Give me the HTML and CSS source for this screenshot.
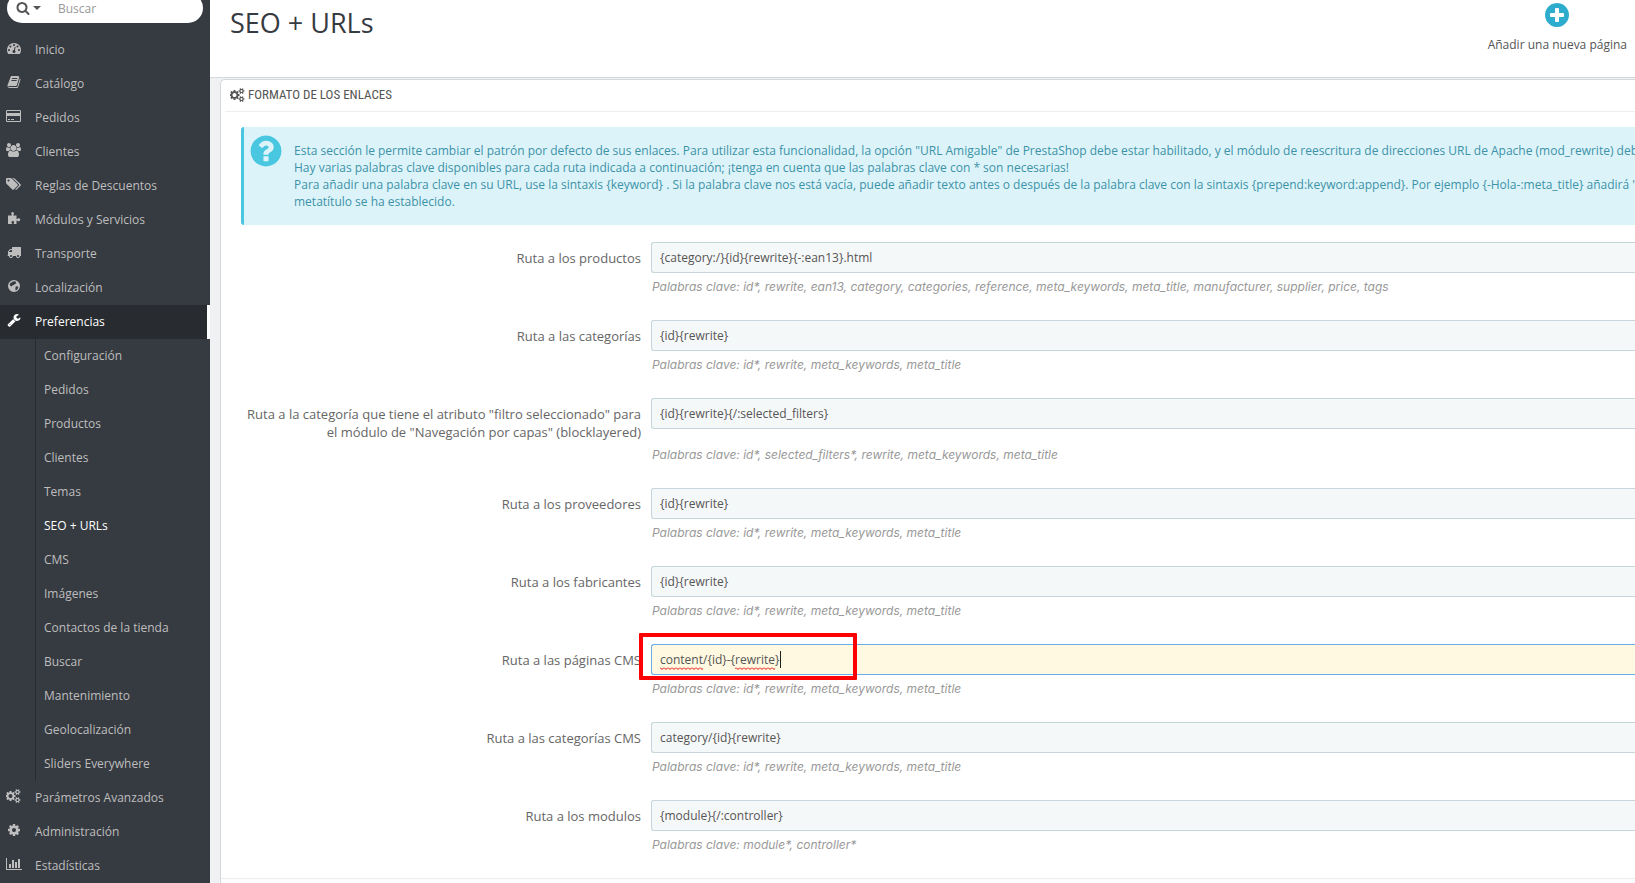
FILE: index.html
```html
<!DOCTYPE html>
<html lang="es">
<head>
<meta charset="UTF-8">
<meta name="viewport" content="width=device-width, initial-scale=1.0">
<title>SEO + URLs</title>
<link rel="stylesheet" href="styles.css">
</head>
<body>

<!-- Iconos que se usan más de una vez -->
<svg class="sprite" aria-hidden="true">
  <symbol id="icon-cogs" viewBox="0 0 1920 1792"><path d="M832 896q0-106-75-181t-181-75-181 75-75 181 75 181 181 75 181-75 75-181zm768 512q0-52-38-90t-90-38-90 38-38 90q0 53 37.5 90.5t90.5 37.5 90.5-37.5 37.5-90.5zm0-1024q0-52-38-90t-90-38-90 38-38 90q0 53 37.5 90.5t90.5 37.5 90.5-37.5 37.5-90.5zm-384 421v185q0 10-7 19.5t-16 10.5l-155 24q-11 35-32 76 34 48 90 115 7 11 7 20 0 12-7 19-23 30-82.5 89.5t-78.5 59.5q-11 0-21-7l-115-90q-37 19-77 31-11 108-23 155-7 24-30 24h-186q-11 0-20-7.5t-10-17.5l-23-153q-34-10-75-31l-118 89q-7 7-20 7-11 0-21-8-144-133-144-160 0-9 7-19 10-14 41-53t47-61q-23-44-35-82l-152-24q-10-1-17-9.5t-7-19.5v-185q0-10 7-19.5t16-10.5l155-24q11-35 32-76-34-48-90-115-7-11-7-20 0-12 7-20 22-30 82-89t79-59q11 0 21 7l115 90q34-18 77-32 11-108 23-154 7-24 30-24h186q11 0 20 7.5t10 17.5l23 153q34 10 75 31l118-89q8-7 20-7 11 0 21 8 144 133 144 160 0 8-7 19-12 16-42 54t-45 60q23 48 34 82l152 23q10 2 17 10.5t7 19.5zm640 533v140q0 16-149 31-12 27-30 52 51 113 51 138 0 4-4 7-122 71-124 71-8 0-46-47t-52-68q-20 2-30 2t-30-2q-14 21-52 68t-46 47q-2 0-124-71-4-3-4-7 0-25 51-138-18-25-30-52-149-15-149-31v-140q0-16 149-31 13-29 30-52-51-113-51-138 0-4 4-7 4-2 35-20t59-34 30-16q8 0 46 46.5t52 67.5q20-2 30-2t30 2q51-71 92-112l6-2q4 0 124 70 4 3 4 7 0 25-51 138 17 23 30 52 149 15 149 31zm0-1024v140q0 16-149 31-12 27-30 52 51 113 51 138 0 4-4 7-122 71-124 71-8 0-46-47t-52-68q-20 2-30 2t-30-2q-14 21-52 68t-46 47q-2 0-124-71-4-3-4-7 0-25 51-138-18-25-30-52-149-15-149-31v-140q0-16 149-31 13-29 30-52-51-113-51-138 0-4 4-7 4-2 35-20t59-34 30-16q8 0 46 46.5t52 67.5q20-2 30-2t30 2q51-71 92-112l6-2q4 0 124 70 4 3 4 7 0 25-51 138 17 23 30 52 149 15 149 31z"/></symbol>
</svg>

<div class="layout">

  <!-- Menú lateral -->
  <aside class="sidebar">
    <form class="search">
      <button type="button" class="search-type" aria-label="Tipo de búsqueda">
        <svg width="14" height="14" viewBox="0 0 1792 1792"><path d="M1216 832q0-185-131.5-316.5t-316.5-131.5-316.5 131.5-131.5 316.5 131.5 316.5 316.5 131.5 316.5-131.5 131.5-316.5zm512 832q0 52-38 90t-90 38q-54 0-90-38l-343-342q-179 124-399 124-143 0-273.5-55.5t-225-150-150-225-55.5-273.5 55.5-273.5 150-225 225-150 273.5-55.5 273.5 55.5 225 150 150 225 55.5 273.5q0 220-124 399l343 343q37 37 37 90z"/></svg>
        <span class="caret"></span>
      </button>
      <input type="text" class="search-input" placeholder="Buscar" aria-label="Buscar">
    </form>

    <nav class="menu">
      <a href="#" class="menu-item"><span class="menu-icon"><svg width="14" height="14" viewBox="0 0 1792 1792"><path d="M384 1152q0-53-37.5-90.5t-90.5-37.5-90.5 37.5-37.5 90.5 37.5 90.5 90.5 37.5 90.5-37.5 37.5-90.5zm192-448q0-53-37.5-90.5t-90.5-37.5-90.5 37.5-37.5 90.5 37.5 90.5 90.5 37.5 90.5-37.5 37.5-90.5zm428 481l101-382q6-26-7.5-48.5t-38.5-29.5-48 6.5-30 39.5l-101 382q-60 5-107 43.5t-63 98.5q-20 77 20 146t117 89 146-20 89-117q16-60-6-117t-72-91zm660-33q0-53-37.5-90.5t-90.5-37.5-90.5 37.5-37.5 90.5 37.5 90.5 90.5 37.5 90.5-37.5 37.5-90.5zm-640-640q0-53-37.5-90.5t-90.5-37.5-90.5 37.5-37.5 90.5 37.5 90.5 90.5 37.5 90.5-37.5 37.5-90.5zm448 192q0-53-37.5-90.5t-90.5-37.5-90.5 37.5-37.5 90.5 37.5 90.5 90.5 37.5 90.5-37.5 37.5-90.5zm320 448q0 261-141 483-19 29-54 29h-1402q-35 0-54-29-141-221-141-483 0-182 71-348t191-286 286-191 348-71 348 71 286 191 191 286 71 348z"/></svg></span>Inicio</a>
      <a href="#" class="menu-item"><span class="menu-icon"><svg width="14" height="14" viewBox="0 0 1792 1792"><path d="M1703 478q40 57 18 129l-275 906q-19 64-76.5 107.5t-122.5 43.5h-923q-77 0-148.5-53.5t-99.5-131.5q-24-67-2-127 0-4 3-27t4-37q1-8-3-21.5t-3-19.5q2-11 8-21t16.5-23.5 16.5-23.5q23-38 45-91.5t30-91.5q3-10 .5-30t-.5-28q3-11 17-28t17-23q21-36 42-92t25-90q1-9-2.5-32t.5-28q4-13 22-30.5t22-22.5q19-26 42.5-84.5t27.5-96.5q1-8-3-25.5t-2-26.5q2-8 9-18t18-23 17-21q8-12 16.5-30.5t15-35 16-36 19.5-32 26.5-23.5 36-11.5 47.5 5.5l-1 3q38-9 51-9h761q74 0 114 56t18 130l-274 906q-36 119-71.5 153.5t-128.5 34.5h-869q-27 0-38 15-11 16-1 43 24 70 144 70h923q29 0 56-15.5t35-41.5l300-987q7-22 5-57 38 15 59 43zm-1064 2q-4 13 2 22.5t20 9.5h608q13 0 25.5-9.5t16.5-22.5l21-64q4-13-2-22.5t-20-9.5h-608q-13 0-25.5 9.5t-16.5 22.5zm-83 256q-4 13 2 22.5t20 9.5h608q13 0 25.5-9.5t16.5-22.5l21-64q4-13-2-22.5t-20-9.5h-608q-13 0-25.5 9.5t-16.5 22.5z"/></svg></span>Catálogo</a>
      <a href="#" class="menu-item"><span class="menu-icon"><svg width="15" height="14" viewBox="0 0 1920 1792"><path d="M1760 128q66 0 113 47t47 113v1216q0 66-47 113t-113 47h-1600q-66 0-113-47t-47-113v-1216q0-66 47-113t113-47h1600zm-1600 128q-13 0-22.5 9.5t-9.5 22.5v224h1664v-224q0-13-9.5-22.5t-22.5-9.5h-1600zm1600 1280q13 0 22.5-9.5t9.5-22.5v-608h-1664v608q0 13 9.5 22.5t22.5 9.5h1600zm-1504-128v-128h256v128h-256zm384 0v-128h384v128h-384z"/></svg></span>Pedidos</a>
      <a href="#" class="menu-item"><span class="menu-icon"><svg width="15" height="14" viewBox="0 0 1920 1792"><path d="M593 896q-162 5-265 128h-134q-82 0-138-40.5t-56-118.5q0-353 124-353 6 0 43.5 21t97.5 42.5 119 21.5q67 0 133-23-5 37-5 66 0 139 81 256zm1071 637q0 120-73 189.5t-194 69.5h-874q-121 0-194-69.5t-73-189.5q0-53 3.5-103.5t14-109 26.5-108.5 43-97.5 62-81 85.5-53.5 111.5-20q10 0 43 21.5t73 48 107 48 135 21.5 135-21.5 107-48 73-48 43-21.5q61 0 111.5 20t85.5 53.5 62 81 43 97.5 26.5 108.5 14 109 3.5 103.5zm-1024-1277q0 106-75 181t-181 75-181-75-75-181 75-181 181-75 181 75 75 181zm704 384q0 159-112.5 271.5t-271.5 112.5-271.5-112.5-112.5-271.5 112.5-271.5 271.5-112.5 271.5 112.5 112.5 271.5zm576 225q0 78-56 118.5t-138 40.5h-134q-103-123-265-128 81-117 81-256 0-29-5-66 66 23 133 23 59 0 119-21.5t97.5-42.5 43.5-21q124 0 124 353zm-128-609q0 106-75 181t-181 75-181-75-75-181 75-181 181-75 181 75 75 181z"/></svg></span>Clientes</a>
      <a href="#" class="menu-item"><span class="menu-icon"><svg width="15" height="14" viewBox="0 0 1920 1792"><path d="M448 448q0-53-37.5-90.5t-90.5-37.5-90.5 37.5-37.5 90.5 37.5 90.5 90.5 37.5 90.5-37.5 37.5-90.5zm1067 576q0 53-37 90l-491 492q-39 37-91 37-53 0-90-37l-715-716q-38-37-64.5-101t-26.5-117v-416q0-52 38-90t90-38h416q53 0 117 26.5t102 64.5l715 714q37 39 37 91zm384 0q0 53-37 90l-491 492q-39 37-91 37-36 0-59-14t-53-45l470-470q37-37 37-90 0-52-37-91l-715-714q-38-38-102-64.5t-117-26.5h224q53 0 117 26.5t102 64.5l715 714q37 39 37 91z"/></svg></span>Reglas de Descuentos</a>
      <a href="#" class="menu-item"><span class="menu-icon"><svg width="14" height="14" viewBox="0 0 14 14"><path d="M1 4.500h3.600c.3 0 .4-.3.200-.6C4 2.800 4 1 5.600 1s1.600 1.800.8 2.900c-.2.300-.1.600.2.600H9.500v3.100c0 .4.300.5.700.3 1.100-.9 3-.8 3 .9s-1.900 1.800-3 .9c-.4-.3-.7-.1-.7.300v3H7c-.4 0-.5-.3-.3-.7.700-1 .5-2.300-.9-2.300s-1.700 1.300-.9 2.300c.3.400.1.700-.3.700H1z"/></svg></span>Módulos y Servicios</a>
      <a href="#" class="menu-item"><span class="menu-icon"><svg width="14" height="14" viewBox="0 0 1792 1792"><path d="M640 1408q0-52-38-90t-90-38-90 38-38 90 38 90 90 38 90-38 38-90zm-384-512h384v-256h-158q-13 0-22 9l-195 195q-9 9-9 22v30zm1280 512q0-52-38-90t-90-38-90 38-38 90 38 90 90 38 90-38 38-90zm256-1088v1024q0 15-4 26.5t-13.5 18.5-16.5 11.5-23.5 6-22.5 2-25.5 0-22.5-.5q0 106-75 181t-181 75-181-75-75-181h-384q0 106-75 181t-181 75-181-75-75-181h-64q-3 0-22.5.5t-25.5 0-22.5-2-23.5-6-16.5-11.5-13.5-18.5-4-26.5q0-26 19-45t45-19v-320q0-8-.5-35t0-38 2.5-34.5 6.5-37 14-30.5 22.5-30l198-198q19-19 50.5-32t58.5-13h160v-192q0-26 19-45t45-19h1024q26 0 45 19t19 45z"/></svg></span>Transporte</a>
      <a href="#" class="menu-item"><span class="menu-icon"><svg width="14" height="14" viewBox="0 0 14 14"><path fill-rule="evenodd" d="M7 1a6 6 0 1 0 0 12A6 6 0 0 0 7 1zM7.500 2.200l2 .8-.8.600.6.900-1.500.4-.9 1.200-1.600.3-.6 1.100-1.500-.8-.5-1.500.9-1.400 1.200-.3 1-.9zM8.800 7.300l2.200.2.300 1.300-1.300 1.900-1.300.8-.4-1.800z"/></svg></span>Localización</a>
      <a href="#" class="menu-item active"><span class="menu-icon"><svg width="14" height="14" viewBox="0 0 1792 1792"><path d="M448 1472q0-26-19-45t-45-19-45 19-19 45 19 45 45 19 45-19 19-45zm644-420l-682 682q-37 37-90 37-52 0-91-37l-106-108q-38-36-38-90 0-53 38-91l681-681q39 98 114.500 173.500t173.500 114.500zm634-435q0 39-23 106-47 134-164.500 217.500t-258.500 83.500q-185 0-316.500-131.500t-131.500-316.500 131.500-316.500 316.500-131.500q58 0 121.500 16.500t107.500 46.500q16 11 16 28t-16 28l-293 169v224l193 107q5-3 79-48.500t135.500-81 70.500-35.500q15 0 23.500 10t8.500 25z"/></svg></span>Preferencias</a>

      <div class="submenu">
        <a href="#" class="submenu-item">Configuración</a>
        <a href="#" class="submenu-item">Pedidos</a>
        <a href="#" class="submenu-item">Productos</a>
        <a href="#" class="submenu-item">Clientes</a>
        <a href="#" class="submenu-item">Temas</a>
        <a href="#" class="submenu-item current">SEO + URLs</a>
        <a href="#" class="submenu-item">CMS</a>
        <a href="#" class="submenu-item">Imágenes</a>
        <a href="#" class="submenu-item">Contactos de la tienda</a>
        <a href="#" class="submenu-item">Buscar</a>
        <a href="#" class="submenu-item">Mantenimiento</a>
        <a href="#" class="submenu-item">Geolocalización</a>
        <a href="#" class="submenu-item">Sliders Everywhere</a>
      </div>

      <a href="#" class="menu-item"><span class="menu-icon"><svg width="15" height="14"><use href="#icon-cogs"/></svg></span>Parámetros Avanzados</a>
      <a href="#" class="menu-item"><span class="menu-icon"><svg width="14" height="14" viewBox="0 0 1792 1792"><path d="M1152 896q0-106-75-181t-181-75-181 75-75 181 75 181 181 75 181-75 75-181zm512-109v222q0 12-8 23t-20 13l-185 28q-19 54-39 91 35 50 107 138 10 12 10 25t-9 23q-27 37-99 108t-94 71q-12 0-26-9l-138-108q-44 23-91 38-16 136-29 186-7 28-36 28h-222q-14 0-24.500-8.500t-11.500-21.500l-28-184q-49-16-90-37l-141 107q-10 9-25 9-14 0-25-11-126-114-165-168-7-10-7-23 0-12 8-23 15-21 51-66.500t54-70.500q-27-50-41-99l-183-27q-13-2-21-12.500t-8-23.500v-222q0-12 8-23t19-13l186-28q14-46 39-92-40-57-107-138-10-12-10-24 0-10 9-23 26-36 98.500-107.500t94.500-71.500q13 0 26 10l138 107q44-23 91-38 16-136 29-186 7-28 36-28h222q14 0 24.500 8.500t11.500 21.500l28 184q49 16 90 37l142-107q9-9 24-9 13 0 25 10 129 119 165 170 7 8 7 22 0 12-8 23-15 21-51 66.500t-54 70.500q26 50 41 98l183 28q13 2 21 12.500t8 23.500z"/></svg></span>Administración</a>
      <a href="#" class="menu-item"><span class="menu-icon"><svg width="16" height="14" viewBox="0 0 2048 1792"><path d="M640 896v512h-256v-512h256zm384-512v1024h-256v-1024h256zm1024 1152v128h-2048v-1536h128v1408h1920zm-640-896v768h-256v-768h256zm384-384v1152h-256v-1152h256z"/></svg></span>Estadísticas</a>
    </nav>
  </aside>

  <main class="content">
    <header class="page-head">
      <h1 class="page-title">SEO + URLs</h1>
      <a href="#" class="toolbar-btn">
        <svg width="28" height="28" viewBox="0 0 1792 1792"><path d="M1344 960v-128q0-26-19-45t-45-19h-256v-256q0-26-19-45t-45-19h-128q-26 0-45 19t-19 45v256h-256q-26 0-45 19t-19 45v128q0 26 19 45t45 19h256v256q0 26 19 45t45 19h128q26 0 45-19t19-45v-256h256q26 0 45-19t19-45zm320-64q0 209-103 385.500t-279.500 279.500-385.500 103-385.500-103-279.500-279.500-103-385.500 103-385.500 279.500-279.500 385.500-103 385.500 103 279.500 279.500 103 385.500z"/></svg>
        <span>Añadir una nueva página</span>
      </a>
    </header>

    <section class="panel">
      <h2 class="panel-heading"><svg width="15" height="14"><use href="#icon-cogs"/></svg>Formato de los enlaces</h2>

      <div class="panel-body">
        <div class="alert">
          <svg class="alert-icon" width="36" height="36" viewBox="0 0 1792 1792"><path d="M1024 1376v-192q0-14-9-23t-23-9h-192q-14 0-23 9t-9 23v192q0 14 9 23t23 9h192q14 0 23-9t9-23zm256-672q0-88-55.500-163t-138.500-116-170-41q-243 0-371 213-15 24 8 42l132 100q7 6 19 6 16 0 25-12 53-68 86-92 34-24 86-24 48 0 85.500 26t37.500 59q0 38-20 61t-68 45q-63 28-115.500 86.500t-52.500 125.500v36q0 14 9 23t23 9h192q14 0 23-9t9-23q0-19 21.500-49.500t54.500-49.500q32-18 49-28.500t46-35 44.500-48 28-60.500 12.500-81zm384 192q0 209-103 385.500t-279.500 279.500-385.500 103-385.500-103-279.500-279.500-103-385.500 103-385.500 279.500-279.500 385.500-103 385.500 103 279.500 279.500 103 385.500z"/></svg>
          <p class="alert-text">
            Esta sección le permite cambiar el patrón por defecto de sus enlaces. Para utilizar esta funcionalidad, la opción "URL Amigable" de PrestaShop debe estar habilitado, y el módulo de reescritura de direcciones URL de Apache (mod_rewrite) deb<br>
            Hay varias palabras clave disponibles para cada ruta indicada a continuación; ¡tenga en cuenta que las palabras clave con * son necesarias!<br>
            Para añadir una palabra clave en su URL, use la sintaxis {keyword} . Si la palabra clave nos está vacía, puede añadir texto antes o después de la palabra clave con la sintaxis {prepend:keyword:append}. Por ejemplo {-Hola-:meta_title} añadirá "<br>
            metatítulo se ha establecido.
          </p>
        </div>

        <form class="routes">
          <div class="form-group">
            <label for="productos">Ruta a los productos</label>
            <div class="field"><input type="text" id="productos" value="{category:/}{id}{rewrite}{-:ean13}.html"></div>
            <p class="help">Palabras clave: id*, rewrite, ean13, category, categories, reference, meta_keywords, meta_title, manufacturer, supplier, price, tags</p>
          </div>
          <div class="form-group">
            <label for="categorias">Ruta a las categorías</label>
            <div class="field"><input type="text" id="categorias" value="{id}{rewrite}"></div>
            <p class="help">Palabras clave: id*, rewrite, meta_keywords, meta_title</p>
          </div>
          <div class="form-group">
            <label for="filtros">Ruta a la categoría que tiene el atributo "filtro seleccionado" para el módulo de "Navegación por capas" (blocklayered)</label>
            <div class="field"><input type="text" id="filtros" value="{id}{rewrite}{/:selected_filters}"></div>
            <p class="help">Palabras clave: id*, selected_filters*, rewrite, meta_keywords, meta_title</p>
          </div>
          <div class="form-group">
            <label for="proveedores">Ruta a los proveedores</label>
            <div class="field"><input type="text" id="proveedores" value="{id}{rewrite}"></div>
            <p class="help">Palabras clave: id*, rewrite, meta_keywords, meta_title</p>
          </div>
          <div class="form-group">
            <label for="fabricantes">Ruta a los fabricantes</label>
            <div class="field"><input type="text" id="fabricantes" value="{id}{rewrite}"></div>
            <p class="help">Palabras clave: id*, rewrite, meta_keywords, meta_title</p>
          </div>
          <div class="form-group">
            <label for="cms">Ruta a las páginas CMS</label>
            <div class="field">
              <input type="text" id="cms" class="editing" value="content/{id}-{rewrite}">
              <!-- Subrayado ortográfico y cursor -->
              <svg class="spelling" width="124" height="20" aria-hidden="true">
                <defs><pattern id="wave" width="4" height="3" y="17" patternUnits="userSpaceOnUse"><path d="M0 .5 2 2.500 4 .5" fill="none" stroke="#e00000"/></pattern></defs>
                <rect x="0" y="17" width="43" height="3" fill="url(#wave)"/>
                <rect x="75" y="17" width="40" height="3" fill="url(#wave)"/>
                <rect x="120" y="1" width="1" height="17" fill="#222"/>
              </svg>
              <span class="highlight"></span>
            </div>
            <p class="help">Palabras clave: id*, rewrite, meta_keywords, meta_title</p>
          </div>
          <div class="form-group">
            <label for="categorias-cms">Ruta a las categorías CMS</label>
            <div class="field"><input type="text" id="categorias-cms" value="category/{id}{rewrite}"></div>
            <p class="help">Palabras clave: id*, rewrite, meta_keywords, meta_title</p>
          </div>
          <div class="form-group">
            <label for="modulos">Ruta a los modulos</label>
            <div class="field"><input type="text" id="modulos" value="{module}{/:controller}"></div>
            <p class="help">Palabras clave: module*, controller*</p>
          </div>
        </form>
      </div>

      <div class="panel-footer"></div>
    </section>
  </main>

</div>

</body>
</html>
```
FILE: styles.css
```css
* {
  box-sizing: border-box;
}
body {
  margin: 0;
  font-family: "Open Sans", sans-serif;
  font-size: 12px;
  color: #555;
  background-color: #eff1f2;
  overflow: hidden;
}
a {
  text-decoration: none;
}
svg {
  fill: currentColor;
}
.sprite {
  display: none;
}
.layout {
  display: flex;
  min-height: 100vh;
}

/* Menú lateral */
.sidebar {
  flex: 0 0 210px;
  min-width: 0;
  background-color: #363a41;
}
.search {
  display: flex;
  height: 30px;
  margin: -7px 7px 10px;
  background-color: #fff;
  border-radius: 15px;
  overflow: hidden;
}
.search-type {
  display: flex;
  align-items: center;
  gap: 3px;
  width: 43px;
  padding: 0 0 0 9px;
  border: none;
  background: none;
  color: #555;
}
.caret {
  border-top: 4px solid #555;
  border-left: 4px solid transparent;
  border-right: 4px solid transparent;
}
.search-input {
  flex: 1;
  min-width: 0;
  padding: 0 8px;
  border: none;
  background: none;
  font: inherit;
}
.search-input::placeholder {
  color: #999;
}
.menu-item {
  display: flex;
  align-items: center;
  height: 34px;
  line-height: 34px;
  color: #bebebe;
}
.menu-icon {
  display: flex;
  justify-content: center;
  width: 27px;
  margin-right: 8px;
  padding-bottom: 4px;
}
.menu-item.active {
  background-color: #282b30;
  border-right: 3px solid #fff;
  color: #fff;
}
.submenu {
  margin-left: 35px;
  border-left: 1px solid #282b30;
}
.submenu-item {
  display: block;
  padding-left: 8px;
  line-height: 34px;
  color: #bebebe;
}
.submenu-item.current {
  color: #fff;
}

/* Cabecera */
.content {
  flex: 1;
  min-width: 0;
  display: flex;
  flex-direction: column;
}
.page-head {
  display: flex;
  justify-content: space-between;
  align-items: flex-start;
  height: 78px;
  padding: 0 8px 0 20px;
  background-color: #fff;
  border-bottom: 1px solid #d3d8db;
}
.page-title {
  margin: 0;
  font-size: 27px;
  font-weight: 400;
  line-height: 46px;
  color: #363a41;
}
.toolbar-btn {
  display: flex;
  flex-direction: column;
  align-items: center;
  gap: 7px;
  padding-top: 1px;
  line-height: 18px;
  color: #555;
}
.toolbar-btn svg {
  color: #2eacce;
}

/* Panel */
.panel {
  flex: 1;
  display: flex;
  flex-direction: column;
  margin: 1px 0 0 10px;
  background-color: #fff;
  border: 1px solid #d3d8db;
  border-right: none;
  border-bottom: none;
  border-radius: 5px 0 0 0;
}
.panel-heading {
  display: flex;
  align-items: center;
  gap: 3px;
  height: 32px;
  margin: 0 0 0 4px;
  padding: 0 0 2px 5px;
  border-bottom: 1px solid #eee;
  font-family: "Roboto Condensed", Roboto, sans-serif;
  font-size: 13px;
  font-weight: 400;
  text-transform: uppercase;
  color: #555;
}
.panel-body {
  padding: 15px 0 0 20px;
}
.alert {
  display: flex;
  gap: 10px;
  margin-bottom: 17px;
  padding: 15px 0 15px 4px;
  background-color: #dcf4f9;
  border-left: 3px solid #4ac7e0;
  border-radius: 3px 0 0 3px;
  color: #3d92a8;
  overflow: hidden;
}
.alert-icon {
  flex: none;
  margin-top: -9px;
  color: #4ac7e0;
}
.alert-text {
  margin: 0;
  line-height: 17px;
  white-space: nowrap;
}
.form-group {
  display: grid;
  grid-template-columns: 400px 1fr;
  column-gap: 10px;
  margin-bottom: 24px;
}
.form-group label {
  padding-top: 7px;
  font-size: 13px;
  line-height: 18px;
  text-align: right;
  color: #666;
}
.field {
  position: relative;
}
.field input {
  display: block;
  width: 100%;
  height: 31px;
  padding: 0 8px;
  border: 1px solid #c7d6db;
  border-right: none;
  border-radius: 3px 0 0 3px;
  background-color: #f5f8f9;
  font: inherit;
  color: #555;
}
.field input.editing {
  border-color: #66afe9;
  background-color: #fff9e1;
}
.spelling {
  position: absolute;
  top: 6px;
  left: 9px;
}
/* Recuadro rojo sobre el campo */
.highlight {
  position: absolute;
  top: -11px;
  left: -12px;
  width: 218px;
  height: 47px;
  border: 4px solid #f00;
  border-radius: 1px;
}
.help {
  grid-column: 2;
  margin: 5px 0 0;
  padding-left: 1px;
  font-family: Inter, "Open Sans", sans-serif;
  line-height: 18px;
  font-style: italic;
  color: #999;
}
.panel-footer {
  flex: 1;
  background-color: #fcfdfe;
  border-top: 1px solid #eee;
}
```
